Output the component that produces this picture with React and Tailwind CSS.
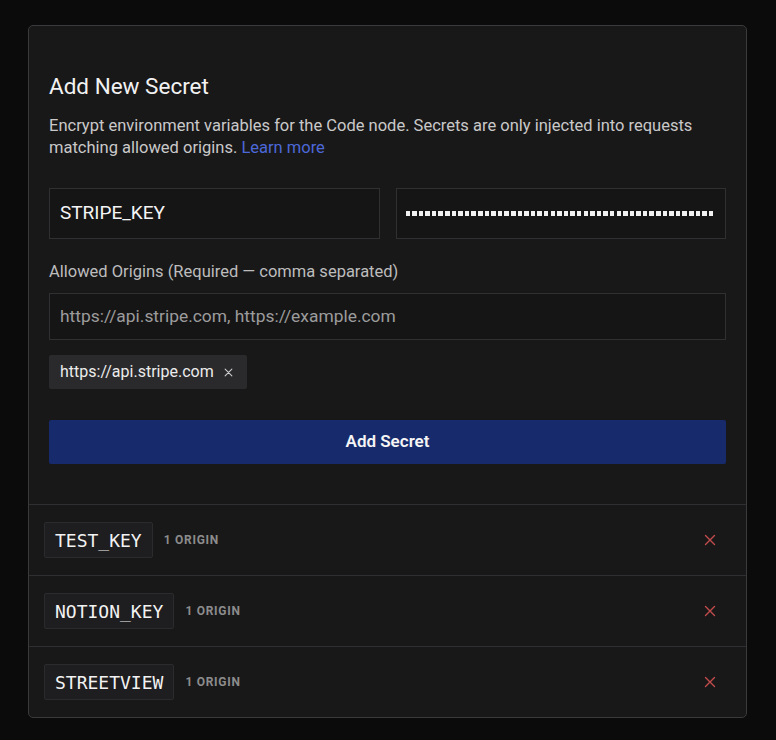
import React from "react";

const sans = { fontFamily: "Roboto, 'Noto Sans', sans-serif" };

function XIcon({ className }) {
  return (
    <svg viewBox="0 0 12 12" className={className} fill="none" stroke="currentColor" strokeWidth="1.4" strokeLinecap="round">
      <path d="M1.5 1.5 L10.5 10.5 M10.5 1.5 L1.5 10.5" />
    </svg>
  );
}

const rows = ["TEST_KEY", "NOTION_KEY", "STREETVIEW"];

export default function App() {
  const dots = Array.from({ length: 47 });
  return (
    <div className="min-h-[740px] bg-[#0b0b0b] pt-[25px] pl-[28px]" style={sans}>
      <div className="w-[719px] h-[693px] rounded-[5px] border border-[#3a393b] bg-[#191819] flex flex-col">
        <div className="px-[20px] pt-[46px] pb-[40px]">
          <h2 className="text-[22.5px] leading-[28px] text-[#f2f2f2]">Add New Secret</h2>
          <p className="mt-[15px] text-[16.5px] leading-[22px] text-[#c9c9c9]">
            Encrypt environment variables for the Code node. Secrets are only injected into requests matching allowed origins.{" "}
            <span className="text-[#4c68d8]">Learn more</span>
          </p>
          <div className="mt-[29px] grid grid-cols-2 gap-[16px]">
            <div className="h-[51px] border border-[#302f31] bg-[#161516] flex items-center px-[10px] text-[19px] text-[#f4f4f4]">
              STRIPE_KEY
            </div>
            <div className="h-[51px] border border-[#302f31] bg-[#161516] flex items-center px-[9px]">
              <div className="flex gap-[2.1px]">
                {dots.map((_, i) => (
                  <span key={i} className="block w-[4.5px] h-[4.5px] bg-[#f0f0f0]" />
                ))}
              </div>
            </div>
          </div>
          <div className="mt-[22px] text-[16.5px] leading-[22px] text-[#bdbdbd]">
            Allowed Origins (Required — comma separated)
          </div>
          <div className="mt-[10px] h-[47px] border border-[#302f31] bg-[#161516] flex items-center px-[10px] text-[17.4px] text-[#9c9c9c]">
            https://api.stripe.com, https://example.com
          </div>
          <div className="mt-[15px] flex">
            <div className="h-[34px] rounded-[2px] bg-[#2a292b] flex items-center pl-[11px] pr-[14px] gap-[10px] text-[16px] text-[#ececec]">
              https://api.stripe.com
              <XIcon className="w-[9px] h-[9px] text-[#cfcfcf]" />
            </div>
          </div>
          <button className="mt-[31px] w-full h-[44px] rounded-[2px] bg-[#172a6c] text-[17px] font-semibold text-[#f5f5f5]">
            Add Secret
          </button>
        </div>
        {rows.map((r) => (
          <div key={r} className="h-[71px] border-t border-[#2f2e30] flex items-center pl-[15px] pr-[30px]">
            <div
              className="h-[36px] rounded-[2px] border border-[#2b2a2c] bg-[#1e1d1f] flex items-center px-[10px] text-[18px] text-[#f2f2f2]"
              style={{ fontFamily: "'DejaVu Sans Mono', 'Liberation Mono', monospace" }}
            >
              {r}
            </div>
            <span className="ml-[11px] text-[12px] font-bold tracking-[0.06em] text-[#8c8c8c]">1 ORIGIN</span>
            <div className="ml-auto">
              <XIcon className="w-[12px] h-[12px] text-[#c24b4b]" />
            </div>
          </div>
        ))}
      </div>
    </div>
  );
}
